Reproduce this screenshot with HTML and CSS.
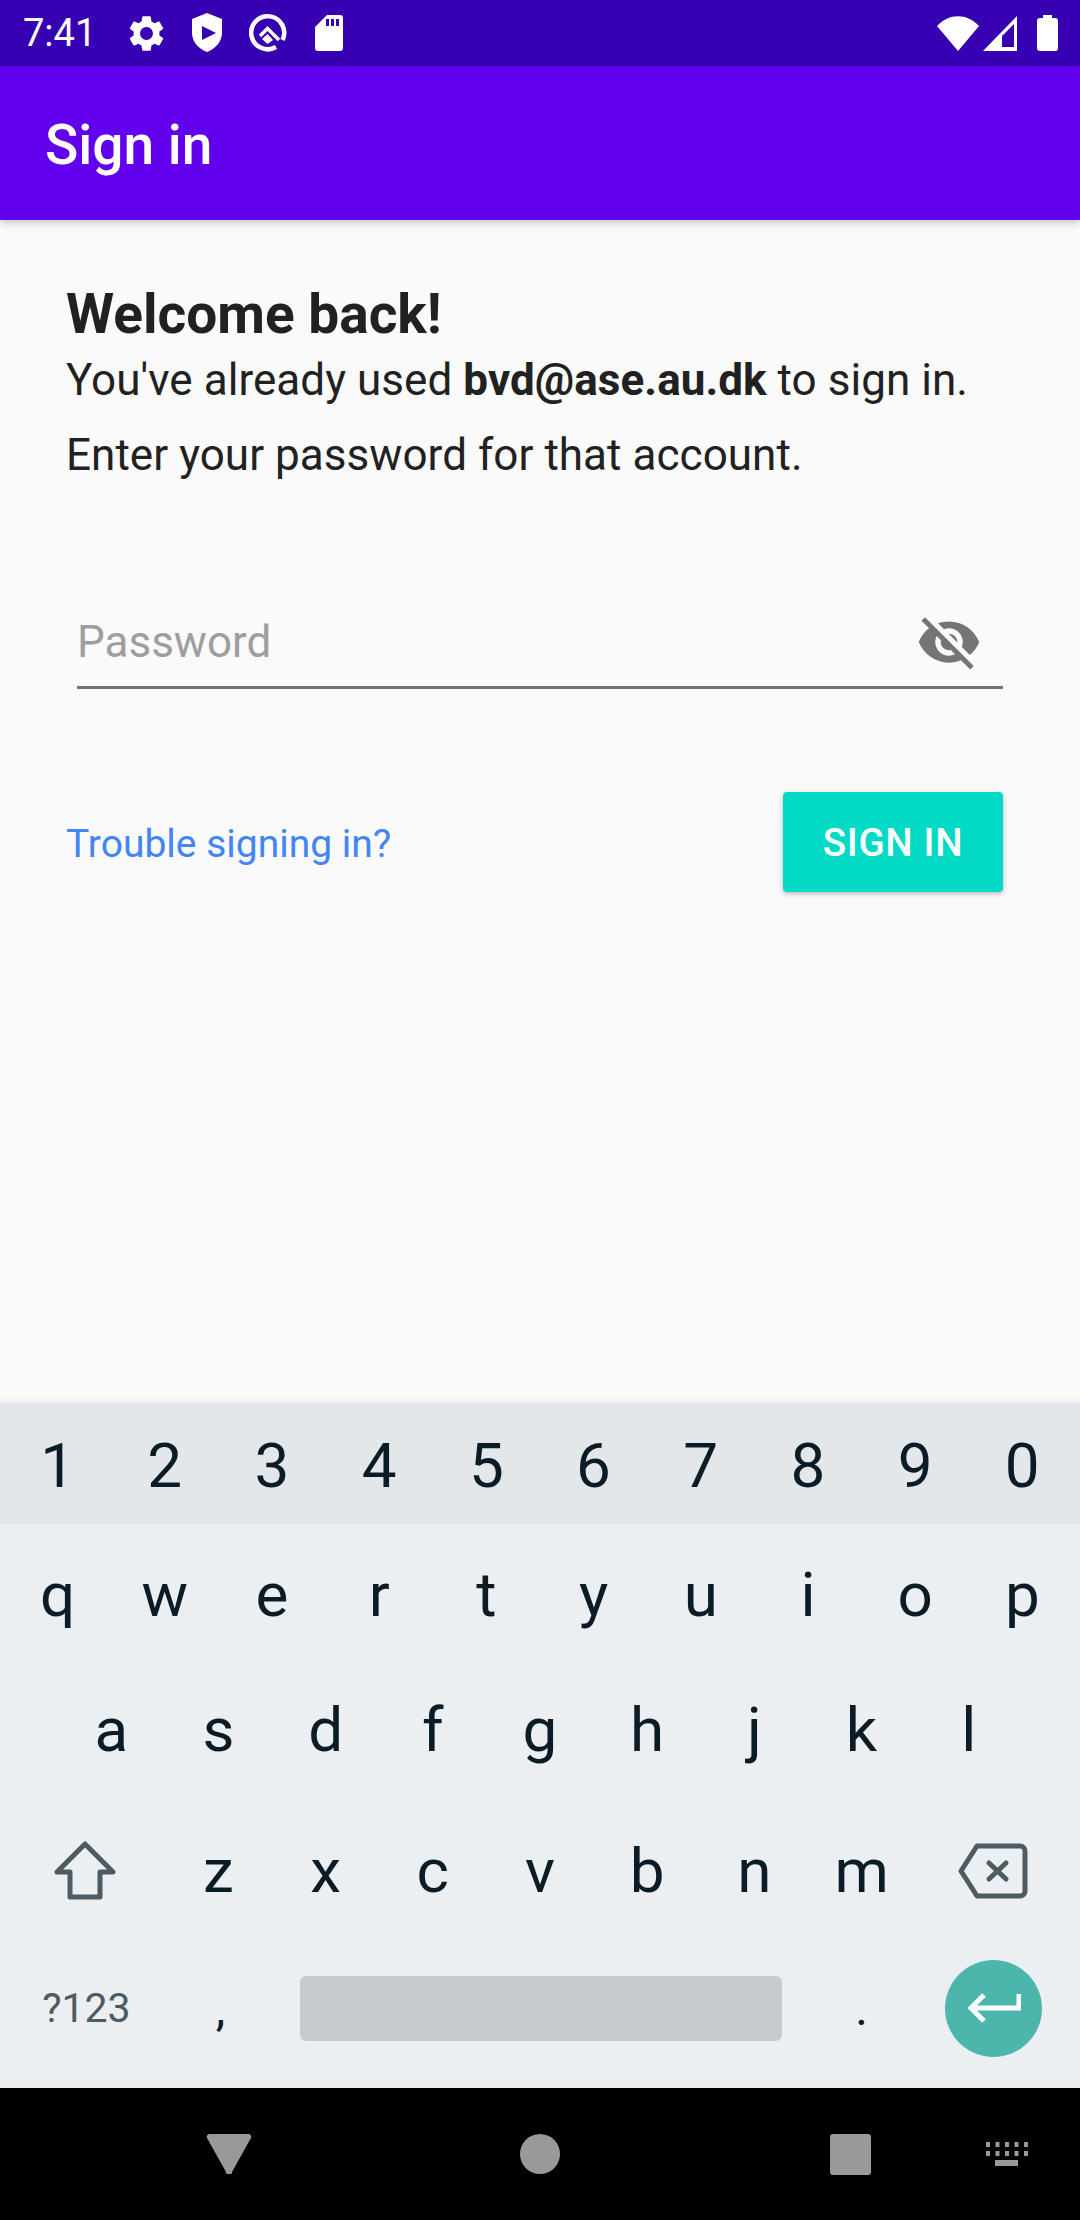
FILE: index.html
```html
<!DOCTYPE html>
<html lang="en">
<head>
  <meta charset="UTF-8" />
  <title>Sign in</title>
  <link rel="stylesheet" href="styles.css">
</head>
<body>
  <div class="status-bar">
    <span class="clock">7:41</span>
    <svg class="st-gear" viewBox="0 0 24 24"><path d="M19.14 12.94c.04-.3.06-.61.06-.94 0-.32-.02-.64-.07-.94l2.03-1.58c.18-.14.23-.41.12-.61l-1.92-3.32c-.12-.22-.37-.29-.59-.22l-2.39.96c-.5-.38-1.03-.7-1.62-.94l-.36-2.54c-.04-.24-.24-.41-.48-.41h-3.84c-.24 0-.43.17-.47.41l-.36 2.54c-.59.24-1.13.57-1.62.94l-2.39-.96c-.22-.08-.47 0-.59.22L2.74 8.87c-.12.21-.08.47.12.61l2.03 1.58c-.05.3-.09.63-.09.94s.02.64.07.94l-2.03 1.58c-.18.14-.23.41-.12.61l1.92 3.32c.12.22.37.29.59.22l2.39-.96c.5.38 1.03.7 1.62.94l.36 2.54c.05.24.24.41.48.41h3.84c.24 0 .44-.17.47-.41l.36-2.54c.59-.24 1.13-.56 1.62-.94l2.39.96c.22.08.47 0 .59-.22l1.92-3.32c.12-.22.07-.47-.12-.61l-2.01-1.58zM12 15.6c-1.98 0-3.6-1.62-3.6-3.6s1.62-3.6 3.6-3.6 3.6 1.62 3.6 3.6-1.62 3.6-3.6 3.6z"/></svg>
    <svg class="st-shield" viewBox="0 0 32 40"><path fill-rule="evenodd" d="M16 0 31 6V20C31 29 24 36 16 39 8 36 1 29 1 20V6ZM11 13V27L25 20Z"/></svg>
    <svg class="st-q" viewBox="0 0 40 40"><path class="ring" d="M27 34A16.500 16.500 0 1 1 33.500 27"/><path class="roof" d="M11 23 18.500 15.500 30 27"/><path d="M18.500 21 24 27 18.500 31 13 26Z"/></svg>
    <svg class="st-sd" viewBox="0 0 28 36"><path fill-rule="evenodd" d="M12 0H25A3 3 0 0 1 28 3V33A3 3 0 0 1 25 36H3A3 3 0 0 1 0 33V12ZM11 4V11H14V4ZM16 4V11H19V4ZM21 4V11H24V4Z"/></svg>
    <span class="st-spacer"></span>
    <svg class="st-wifi" viewBox="0 0 42 35"><path d="M0 10C12-3 30-3 42 10L21 35Z"/></svg>
    <svg class="st-signal" viewBox="0 0 34 35"><path fill-rule="evenodd" d="M34 0V35H0ZM31 8 19 20V31H31Z"/><path d="M19 31H31V33H19Z" opacity=".6"/></svg>
    <svg class="st-battery" viewBox="0 0 21 36"><path d="M6 0H15V3H18A3 3 0 0 1 21 6V33A3 3 0 0 1 18 36H3A3 3 0 0 1 0 33V6A3 3 0 0 1 3 3H6Z"/></svg>
  </div>

  <header class="app-bar">Sign in</header>

  <main class="content">
    <h1 class="welcome">Welcome back!</h1>
    <p class="intro">You've already used <strong>bvd@ase.au.dk</strong> to sign in.<br>Enter your password for that account.</p>

    <div class="field">
      <span class="placeholder">Password</span>
      <svg class="eye" viewBox="0 0 24 24"><path d="M12 7c2.760 0 5 2.240 5 5 0 .65-.13 1.260-.36 1.830l2.920 2.920c1.510-1.260 2.700-2.890 3.430-4.750-1.730-4.390-6-7.500-11-7.500-1.400 0-2.740.25-3.980.7l2.160 2.160C10.740 7.130 11.350 7 12 7zM2 4.270l2.280 2.280.46.46C3.080 8.300 1.780 10.020 1 12c1.730 4.390 6 7.500 11 7.500 1.550 0 3.030-.3 4.380-.84l.42.42L19.730 22 21 20.730 3.270 3 2 4.270zM7.530 9.800l1.550 1.550c-.05.21-.08.43-.08.65 0 1.660 1.340 3 3 3 .22 0 .44-.03.65-.08l1.550 1.550c-.67.33-1.410.53-2.200.53-2.760 0-5-2.240-5-5 0-.79.2-1.530.53-2.200zm4.310-.78l3.150 3.150.02-.16c0-1.660-1.340-3-3-3l-.17.01z"/></svg>
    </div>

    <div class="actions">
      <a class="trouble">Trouble signing in?</a>
      <button class="sign-in">SIGN IN</button>
    </div>
  </main>

  <section class="keyboard">
    <div class="num-row">
      <span class="key">1</span><span class="key">2</span><span class="key">3</span><span class="key">4</span><span class="key">5</span><span class="key">6</span><span class="key">7</span><span class="key">8</span><span class="key">9</span><span class="key">0</span>
    </div>
    <div class="letters">
      <div class="row row-q">
        <span class="key">q</span><span class="key">w</span><span class="key">e</span><span class="key">r</span><span class="key">t</span><span class="key">y</span><span class="key">u</span><span class="key">i</span><span class="key">o</span><span class="key">p</span>
      </div>
      <div class="row row-a">
        <span class="key">a</span><span class="key">s</span><span class="key">d</span><span class="key">f</span><span class="key">g</span><span class="key">h</span><span class="key">j</span><span class="key">k</span><span class="key">l</span>
      </div>
      <div class="row row-z">
        <span class="key wide">
          <svg class="shift" viewBox="0 0 64 60"><path d="M32 3 60 31H47V56H17V31H4Z"/></svg>
        </span>
        <span class="key">z</span><span class="key">x</span><span class="key">c</span><span class="key">v</span><span class="key">b</span><span class="key">n</span><span class="key">m</span>
        <span class="key wide">
          <svg class="backspace" viewBox="0 0 70 56"><path d="M19 3H62A5 5 0 0 1 67 8V48A5 5 0 0 1 62 53H19L3 28Z"/><path d="M31 20 48 36M48 20 31 36"/></svg>
        </span>
      </div>
      <div class="row row-bottom">
        <span class="key wide symbols">?123</span>
        <span class="key comma">,</span>
        <span class="key space"><span class="space-bar"></span></span>
        <span class="key period">.</span>
        <span class="key wide">
          <span class="enter">
            <svg viewBox="0 0 54 32"><path d="M52 2V16H4M17 3 4 16 17 29"/></svg>
          </span>
        </span>
      </div>
    </div>
  </section>

  <nav class="nav-bar">
    <svg class="nav-back" viewBox="0 0 46 40"><path d="M3 0H43A3 3 0 0 1 45 4L26 38A3 3 0 0 1 20 38L1 4A3 3 0 0 1 3 0Z"/></svg>
    <span class="nav-home"></span>
    <span class="nav-recent"></span>
    <svg class="nav-kbd" viewBox="0 0 42 24"><path d="M0 0H4V5H0ZM9.500 0H13.500V5H9.500ZM19 0H23V5H19ZM28.500 0H32.500V5H28.500ZM38 0H42V5H38ZM0 9H4V14H0ZM9.500 9H13.500V14H9.500ZM19 9H23V14H19ZM28.500 9H32.500V14H28.500ZM38 9H42V14H38ZM9 18H32V24H9Z"/></svg>
  </nav>
</body>
</html>
```

FILE: styles.css
```css
:root {
  --primary: #6200ee;
  --primary-dark: #3700b3;
  --teal: #03dac6;
  --bg: #fafafa;
  --text: #212121;
  --kbd-bg: #ebeff2;
  --kbd-top: #e3e7ea;
  --kbd-text: #0b1c26;
  --kbd-icon: #4f5b62;
}

html, body {
  margin: 0;
  height: 100%;
}

body {
  width: 1080px;
  height: 2220px;
  display: flex;
  flex-direction: column;
  overflow: hidden;
  font-family: Roboto, sans-serif;
  background: var(--bg);
  color: var(--text);
}

/* status bar */
.status-bar {
  height: 66px;
  flex: none;
  display: flex;
  align-items: center;
  padding: 0 22px 0 23px;
  background: var(--primary-dark);
  color: #fff;
  fill: #fff;
}

.clock {
  font-size: 38px;
  width: 69px;
  margin-right: 33px;
}

.st-gear { width: 43px; height: 43px; margin-right: 23px; }
.st-shield { width: 32px; height: 40px; margin-right: 26px; }
.st-q { width: 40px; height: 40px; margin-right: 26px; }
.st-sd { width: 28px; height: 36px; }
.st-spacer { flex: 1; }
.st-wifi { width: 42px; height: 35px; margin-right: 4px; }
.st-signal { width: 34px; height: 35px; margin-right: 20px; }
.st-battery { width: 21px; height: 36px; }

.st-q .ring, .st-q .roof {
  fill: none;
  stroke: #fff;
}
.st-q .ring { stroke-width: 4.5; }
.st-q .roof { stroke-width: 3.5; }

/* app bar */
.app-bar {
  height: 151px;
  flex: none;
  display: flex;
  align-items: center;
  padding: 3px 0 0 45px;
  background: var(--primary);
  color: #fff;
  font-size: 55px;
  font-weight: 500;
  box-shadow: 0 3px 8px rgba(0, 0, 0, 0.2);
  position: relative;
}

/* form */
.content {
  flex: 1;
  padding: 65px 77px 0 66px;
}

.welcome {
  margin: 0;
  font-size: 55px;
  line-height: 58px;
  font-weight: 700;
}

.intro {
  margin: 0;
  font-size: 44px;
  line-height: 75px;
  letter-spacing: 0.05px;
}

.field {
  display: flex;
  align-items: center;
  justify-content: space-between;
  height: 88px;
  margin: 105px 0 0 11px;
  padding-right: 21px;
  border-bottom: 3px solid #757575;
}

.placeholder {
  font-size: 44px;
  color: #9e9e9e;
}

.eye {
  width: 66px;
  height: 66px;
  fill: #757575;
}

.actions {
  display: flex;
  align-items: center;
  justify-content: space-between;
  margin-top: 103px;
}

.trouble {
  padding-top: 4px;
  font-size: 39px;
  color: #4285f4;
}

.sign-in {
  width: 220px;
  height: 100px;
  border: 0;
  border-radius: 4px;
  background: var(--teal);
  color: #fff;
  font-family: inherit;
  font-size: 38.500px;
  letter-spacing: 0.7px;
  font-weight: 500;
  box-shadow: 0 2px 5px rgba(0, 0, 0, 0.25);
}

/* keyboard */
.keyboard {
  height: 685px;
  flex: none;
  background: var(--kbd-bg);
  color: var(--kbd-text);
  font-size: 62px;
  display: flex;
  flex-direction: column;
  box-shadow: 0 -2px 6px rgba(0, 0, 0, 0.07);
  position: relative;
}

.num-row {
  height: 117px;
  flex: none;
  display: flex;
  padding: 4px 4px 0;
  background: var(--kbd-top);
}

.letters {
  flex: 1;
  padding: 3px 4px 11px;
  display: flex;
  flex-direction: column;
}

.row {
  display: flex;
  justify-content: center;
}

.row-q { height: 135.500px; }
.row-a { height: 133.500px; }
.row-z { height: 149.500px; }
.row-bottom { flex: 1; padding-bottom: 6px; }

.key {
  width: 107.200px;
  display: flex;
  align-items: center;
  justify-content: center;
}

.key.wide {
  width: 160.800px;
}

.shift {
  width: 64px;
  height: 60px;
  margin-left: 2px;
  fill: none;
  stroke: var(--kbd-icon);
  stroke-width: 5;
  stroke-linejoin: round;
}

.backspace {
  width: 70px;
  height: 56px;
  margin-right: 6px;
  fill: none;
  stroke: var(--kbd-icon);
  stroke-width: 5;
  stroke-linejoin: round;
  stroke-linecap: round;
}

.symbols {
  font-size: 41px;
  padding-left: 2px;
  color: var(--kbd-icon);
}

.comma, .period {
  font-size: 48px;
}

.space {
  flex: 1;
  padding: 0 26px;
  box-sizing: border-box;
}

.space-bar {
  flex: 1;
  height: 65px;
  border-radius: 6px;
  background: #c7cbce;
}

.enter {
  width: 97px;
  height: 97px;
  margin-right: 4px;
  border-radius: 50%;
  background: #4db6ac;
  display: flex;
  align-items: center;
  justify-content: center;
}

.enter svg {
  width: 54px;
  height: 32px;
  fill: none;
  stroke: #fff;
  stroke-width: 5;
}

/* nav bar */
.nav-bar {
  height: 132px;
  flex: none;
  background: #000;
  display: flex;
  align-items: center;
  padding: 0 52px 0 206px;
}

.nav-back { width: 46px; height: 40px; fill: #999; }
.nav-home { width: 40px; height: 40px; margin-left: 268px; border-radius: 50%; background: #999; }
.nav-recent { width: 41px; height: 41px; margin-left: 270px; border-radius: 3px; background: #999; }
.nav-kbd { width: 42px; height: 24px; margin-left: 115px; fill: #999; }
```
